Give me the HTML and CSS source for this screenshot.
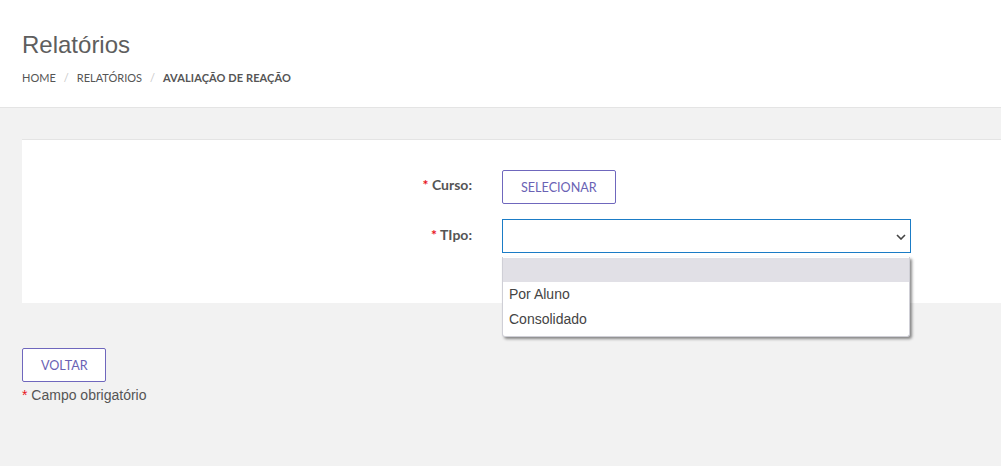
FILE: index.html
```html
<!DOCTYPE html>
<html lang="pt">
<head>
<meta charset="utf-8">
<link rel="stylesheet" href="styles.css">
</head>
<body>
<header class="page-header">
  <h1 class="title">Relatórios</h1>
  <nav class="breadcrumb">
    <span class="crumb">HOME</span><span class="sep">/</span><span class="crumb">RELATÓRIOS</span><span class="sep">/</span><span class="crumb active">AVALIAÇÃO DE REAÇÃO</span>
  </nav>
</header>
<main class="content">
  <section class="card">
    <div class="form-grid">
      <label class="label"><span class="req">*</span> Curso:</label>
      <div class="control"><button class="btn">SELECIONAR</button></div>
      <label class="label label-tipo"><span class="req">*</span> TIpo:</label>
      <div class="control select-wrap">
        <div class="select">
          <svg class="chev" width="10" height="6" viewBox="0 0 10 6"><path d="M1 1l4 4 4-4" fill="none" stroke="#444" stroke-width="1.6"/></svg>
        </div>
        <ul class="dropdown">
          <li class="opt selected">&nbsp;</li>
          <li class="opt">Por Aluno</li>
          <li class="opt">Consolidado</li>
        </ul>
      </div>
    </div>
  </section>
  <div class="footer-actions">
    <button class="btn btn-back">VOLTAR</button>
    <p class="note"><span class="req">*</span> Campo obrigatório</p>
  </div>
</main>
</body>
</html>
```
FILE: styles.css
```css
html, body {
  margin: 0;
  padding: 0;
}
body {
  background: #f2f2f2;
  font-family: "Liberation Sans", Arial, sans-serif;
  color: #555;
  width: 1001px;
  height: 466px;
  overflow: hidden;
}
.page-header {
  background: #fff;
  height: 107px;
  border-bottom: 1px solid #e4e4e4;
  padding: 0 22px;
  box-sizing: content-box;
}
.title {
  margin: 0;
  padding-top: 31px;
  font-size: 24px;
  font-weight: normal;
  color: #5e5e5e;
  line-height: 28px;
}
.breadcrumb {
  margin-top: 12px;
  font-family: Lato, "Liberation Sans", sans-serif;
  font-size: 11px;
  line-height: 14px;
  color: #555;
  display: flex;
  align-items: center;
}
.sep {
  color: #c8c8c8;
  padding: 0 8px;
}
.crumb.active {
  font-weight: bold;
  color: #555;
  letter-spacing: 0.1px;
}
.content {
  padding: 31px 0 0 22px;
}
.card {
  background: #fff;
  border-top: 1px solid #e4e4e4;
  height: 164px;
  box-sizing: border-box;
  padding-top: 30px;
}
.form-grid {
  display: grid;
  grid-template-columns: 450px 409px;
  column-gap: 30px;
  row-gap: 15px;
}
.label {
  text-align: right;
  font-family: Lato, "Liberation Sans", sans-serif;
  font-weight: bold;
  font-size: 14px;
  color: #555;
  padding-top: 7px;
  line-height: 16px;
}
.label-tipo {
  padding-top: 8px;
}
.req {
  color: #e8141c;
}
.btn {
  height: 34px;
  box-sizing: border-box;
  background: #fff;
  border: 1px solid #6f67bd;
  border-radius: 2px;
  color: #6a62b4;
  font-family: Lato, "Liberation Sans", sans-serif;
  font-size: 12.6px;
  padding: 0 18px;
  cursor: pointer;
}
.select-wrap {
  position: relative;
}
.select {
  height: 34px;
  box-sizing: border-box;
  border: 1px solid #1b7cc6;
  background: #fff;
  display: flex;
  align-items: center;
  justify-content: flex-end;
  padding-right: 4px;
}
.chev {
  margin-top: 2px;
}
.dropdown {
  position: absolute;
  top: 38px;
  left: 0;
  width: 406px;
  margin: 0;
  padding: 1px 0 4px;
  list-style: none;
  background: #fff;
  border: 1px solid #cfcfd6;
  border-top: none;
  border-radius: 0 0 3px 3px;
  box-shadow: 2px 2px 3px rgba(0,0,0,0.45);
  z-index: 5;
}
.opt {
  height: 25px;
  line-height: 25px;
  padding: 0 6px;
  font-size: 14px;
  color: #444;
}
.opt.selected {
  background: #e1e0e6;
  height: 24px;
}
.footer-actions {
  padding-top: 45px;
}
.btn-back {
  padding: 0 18px;
  width: 84px;
}
.note {
  margin: 4px 0 0;
  font-size: 14px;
  color: #555;
  line-height: 18px;
}
```
